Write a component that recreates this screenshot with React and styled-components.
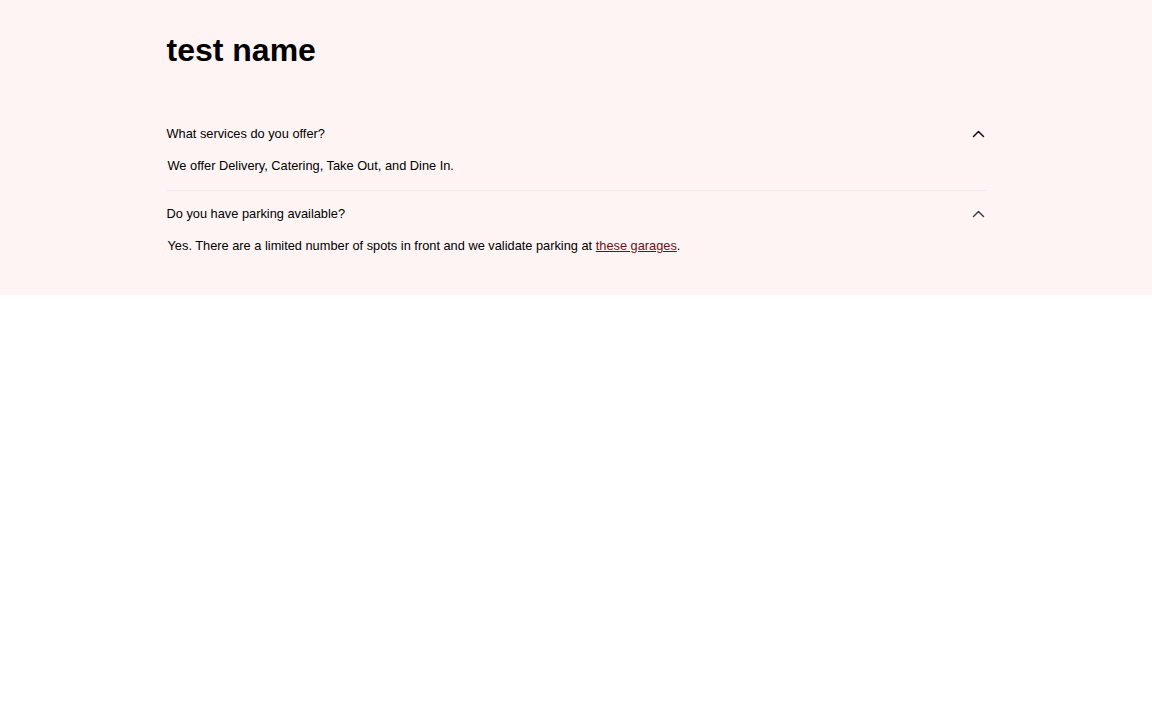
import React from "react";
import styled, { createGlobalStyle } from "styled-components";

const Global = createGlobalStyle`
  html, body { margin: 0; padding: 0; background: #ffffff; }
  body { font-family: "Liberation Sans", Arial, sans-serif; color: #000; }
`;

const Section = styled.section`
  background: #fff4f4;
  padding: 30px 0 25px;
`;

const Inner = styled.div`
  width: 819px;
  margin: 0 auto;
  box-sizing: border-box;
`;

const Title = styled.h1`
  margin: 0 0 41px;
  font-size: 32px;
  line-height: 40px;
  font-weight: 700;
  letter-spacing: 0;
`;

const List = styled.div`
  display: flex;
  flex-direction: column;
`;

const Item = styled.div`
  border-bottom: ${(p) => (p.$last ? "none" : "1px solid #ece8ec")};
`;

const Trigger = styled.button`
  display: flex;
  width: 100%;
  align-items: center;
  justify-content: space-between;
  padding: 15px 0 13px;
  border: 0;
  background: transparent;
  font-family: inherit;
  font-size: 12.8px;
  line-height: 16px;
  color: #000;
  text-align: left;
  cursor: pointer;
`;

const Chevron = styled.svg`
  width: 15px;
  height: 15px;
  flex: none;
  color: ${(p) => p.$tone};
`;

const Answer = styled.div`
  padding: 3px 0 16px 1px;
  font-size: 12.8px;
  line-height: 16px;
  color: #000;
`;

const Link = styled.a`
  color: #6a1020;
  text-decoration: underline;
`;

const Up = ({ tone }) => (
  <Chevron viewBox="0 0 15 15" $tone={tone}>
    <polyline
      points="2.5,9.5 7.5,4.5 12.5,9.5"
      fill="none"
      stroke="currentColor"
      strokeWidth="1.5"
      strokeLinecap="round"
      strokeLinejoin="round"
    />
  </Chevron>
);

export default function App() {
  return (
    <>
      <Global />
      <Section>
        <Inner>
          <Title>test name</Title>
          <List>
            <Item>
              <Trigger>
                What services do you offer?
                <Up tone="#111" />
              </Trigger>
              <Answer>We offer Delivery, Catering, Take Out, and Dine In.</Answer>
            </Item>
            <Item $last>
              <Trigger>
                Do you have parking available?
                <Up tone="#444" />
              </Trigger>
              <Answer>
                Yes. There are a limited number of spots in front and we validate parking at{" "}
                <Link href="#">these garages</Link>.
              </Answer>
            </Item>
          </List>
        </Inner>
      </Section>
    </>
  );
}
